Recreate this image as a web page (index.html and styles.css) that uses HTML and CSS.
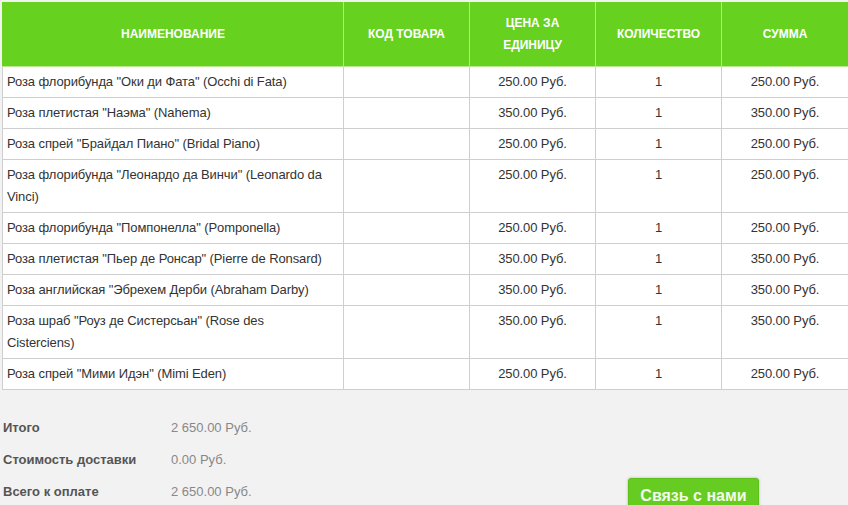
FILE: index.html
```html
<!DOCTYPE html>
<html lang="ru">
<head>
<meta charset="utf-8">
<title>Корзина</title>
<link rel="stylesheet" href="styles.css">
</head>
<body>
<div class="page">
  <table class="cart">
    <colgroup>
      <col class="c-name"><col class="c-code"><col class="c-price"><col class="c-qty"><col class="c-sum">
    </colgroup>
    <thead>
      <tr>
        <th>НАИМЕНОВАНИЕ</th>
        <th>КОД ТОВАРА</th>
        <th>ЦЕНА ЗА<br>ЕДИНИЦУ</th>
        <th>КОЛИЧЕСТВО</th>
        <th>СУММА</th>
      </tr>
    </thead>
    <tbody>
      <tr><td class="name">Роза флорибунда "Оки ди Фата" (Occhi di Fata)</td><td></td><td>250.00 Руб.</td><td>1</td><td>250.00 Руб.</td></tr>
      <tr><td class="name">Роза плетистая "Наэма" (Nahema)</td><td></td><td>350.00 Руб.</td><td>1</td><td>350.00 Руб.</td></tr>
      <tr><td class="name">Роза спрей "Брайдал Пиано" (Bridal Piano)</td><td></td><td>250.00 Руб.</td><td>1</td><td>250.00 Руб.</td></tr>
      <tr><td class="name">Роза флорибунда "Леонардо да Винчи" (Leonardo da Vinci)</td><td></td><td>250.00 Руб.</td><td>1</td><td>250.00 Руб.</td></tr>
      <tr><td class="name">Роза флорибунда "Помпонелла" (Pomponella)</td><td></td><td>250.00 Руб.</td><td>1</td><td>250.00 Руб.</td></tr>
      <tr><td class="name">Роза плетистая "Пьер де Ронсар" (Pierre de Ronsard)</td><td></td><td>350.00 Руб.</td><td>1</td><td>350.00 Руб.</td></tr>
      <tr><td class="name">Роза английская "Эбрехем Дерби (Abraham Darby)</td><td></td><td>350.00 Руб.</td><td>1</td><td>350.00 Руб.</td></tr>
      <tr><td class="name">Роза шраб "Роуз де Систерсьан" (Rose des Cisterciens)</td><td></td><td>350.00 Руб.</td><td>1</td><td>350.00 Руб.</td></tr>
      <tr><td class="name">Роза спрей "Мими Идэн" (Mimi Eden)</td><td></td><td>250.00 Руб.</td><td>1</td><td>250.00 Руб.</td></tr>
    </tbody>
  </table>

  <div class="footer">
    <div class="totals">
      <div class="trow"><span class="tlabel">Итого</span><span class="tval">2 650.00 Руб.</span></div>
      <div class="trow"><span class="tlabel">Стоимость доставки</span><span class="tval">0.00 Руб.</span></div>
      <div class="trow"><span class="tlabel">Всего к оплате</span><span class="tval">2 650.00 Руб.</span></div>
    </div>
    <button class="contact">Связь с нами</button>
  </div>
</div>
</body>
</html>
```

FILE: styles.css
```css
html, body {
  margin: 0;
  padding: 0;
  background: #f2f2f2;
  font-family: Arial, "Liberation Sans", sans-serif;
}

.page {
  padding: 2px 0 0 2px;
}

.cart {
  width: 846px;
  border-collapse: collapse;
  background: #fff;
  font-size: 13px;
  color: #333;
  table-layout: fixed;
}

.c-name { width: 341px; }
.c-code { width: 126px; }
.c-price { width: 126px; }
.c-qty { width: 126px; }
.c-sum { width: 127px; }

.cart th,
.cart td {
  border: 1px solid #cfcfcf;
  line-height: 22px;
  text-align: center;
  vertical-align: top;
}

.cart th {
  background: #66d11f;
  color: #fff;
  font-size: 12px;
  font-weight: bold;
  padding: 10px 4px;
  vertical-align: middle;
  border-color: #b7e68f;
  border-top: none;
}

.cart th:first-child { border-left-color: #66d11f; }
.cart th:last-child { border-right-color: #66d11f; }

.cart td {
  padding: 4px 5px;
  letter-spacing: -0.1px;
}

.cart td.name {
  text-align: left;
  padding-left: 4px;
  padding-right: 12px;
}

.footer {
  display: flex;
  align-items: flex-start;
  margin-top: 22px;
}

.totals {
  width: 625px;
  padding-left: 1px;
}

.trow {
  display: flex;
  height: 32px;
  line-height: 32px;
  font-size: 13px;
}

.tlabel {
  width: 168px;
  font-weight: bold;
  color: #555;
}

.tval {
  color: #888;
}

.contact {
  margin-top: 66px;
  width: 131px;
  height: 36px;
  padding: 0;
  border: 1px solid #5cbf1a;
  border-radius: 3px;
  background: #66cc22;
  color: #f2fbea;
  font-family: Arial, "Liberation Sans", sans-serif;
  font-size: 16px;
  font-weight: bold;
  box-shadow: 0 0 3px rgba(0,0,0,0.25);
}
```
